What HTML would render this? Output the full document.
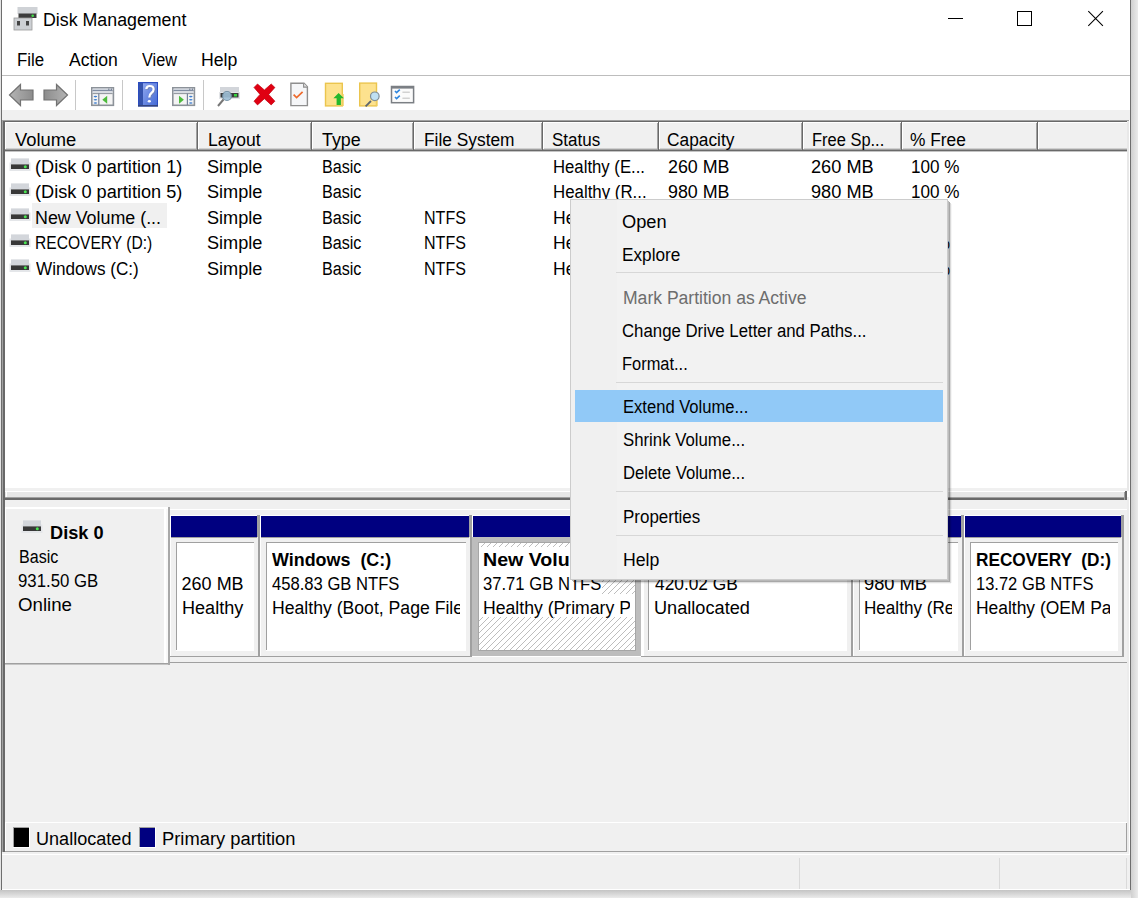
<!DOCTYPE html>
<html><head><meta charset="utf-8"><style>
html,body{margin:0;padding:0;width:1138px;height:898px;overflow:hidden;background:#fff;}
#w div{position:absolute;}
#w{position:absolute;left:0;top:0;width:1138px;height:898px;overflow:hidden;}
.t{font-family:"Liberation Sans",sans-serif;font-size:18px;line-height:22px;white-space:pre;transform-origin:0 0;}
svg{position:absolute;}
</style></head><body><div id="w">
<div style="left:0px;top:0px;width:1138px;height:898px;background:#e8e8e8;"></div>
<div style="left:1131px;top:0px;width:7px;height:898px;background:#d6d6d6;background:linear-gradient(90deg,#d0d0d0,#ebebeb)"></div>
<div style="left:0px;top:890px;width:1131px;height:8px;background:#d6d6d6;background:linear-gradient(180deg,#c4c4c4,#ebebeb)"></div>
<div style="left:0px;top:0px;width:1px;height:890px;background:#e4e4e4;"></div>
<div style="left:1px;top:0px;width:1130px;height:890px;background:#ffffff;"></div>
<div style="left:1px;top:0px;width:1px;height:890px;background:#6e6e6e;"></div>
<div style="left:1130px;top:0px;width:1px;height:890px;background:#6e6e6e;"></div>
<div style="left:2px;top:75px;width:1128px;height:1px;background:#bdbdbd;"></div>
<div style="left:2px;top:110px;width:1128px;height:10px;background:#f0f0f0;"></div>
<div style="left:2px;top:120px;width:1128px;height:372px;background:#ffffff;"></div>
<div style="left:2px;top:120px;width:1127px;height:1px;background:#a0a0a0;"></div>
<div style="left:2px;top:120px;width:1px;height:732px;background:#a0a0a0;"></div>
<div style="left:3px;top:121px;width:1125px;height:1px;background:#696969;"></div>
<div style="left:3px;top:121px;width:1px;height:731px;background:#696969;"></div>
<div style="left:4px;top:121px;width:1px;height:731px;background:#696969;"></div>
<div style="left:5px;top:488px;width:1122px;height:3px;background:#f0f0f0;"></div>
<div style="left:1127px;top:121px;width:2px;height:370px;background:#e8e8e8;"></div>
<div style="left:5px;top:122px;width:1122px;height:29px;background:#f0f0f0;"></div>
<div style="left:5px;top:122px;width:1122px;height:1px;background:#ffffff;"></div>
<div style="left:5px;top:148px;width:1122px;height:1px;background:#d0d0d0;"></div>
<div style="left:5px;top:149px;width:1122px;height:1px;background:#a0a0a0;"></div>
<div style="left:5px;top:150px;width:1122px;height:1px;background:#696969;"></div>
<div style="left:5px;top:151px;width:1122px;height:1px;background:#c4c4c4;"></div>
<div style="left:5px;top:122px;width:1px;height:27px;background:#ffffff;"></div>
<div style="left:196px;top:123px;width:1px;height:26px;background:#a0a0a0;"></div>
<div style="left:197px;top:122px;width:1px;height:29px;background:#696969;"></div>
<div style="left:198px;top:122px;width:1px;height:27px;background:#ffffff;"></div>
<div style="left:310px;top:123px;width:1px;height:26px;background:#a0a0a0;"></div>
<div style="left:311px;top:122px;width:1px;height:29px;background:#696969;"></div>
<div style="left:312px;top:122px;width:1px;height:27px;background:#ffffff;"></div>
<div style="left:412px;top:123px;width:1px;height:26px;background:#a0a0a0;"></div>
<div style="left:413px;top:122px;width:1px;height:29px;background:#696969;"></div>
<div style="left:414px;top:122px;width:1px;height:27px;background:#ffffff;"></div>
<div style="left:541px;top:123px;width:1px;height:26px;background:#a0a0a0;"></div>
<div style="left:542px;top:122px;width:1px;height:29px;background:#696969;"></div>
<div style="left:543px;top:122px;width:1px;height:27px;background:#ffffff;"></div>
<div style="left:657px;top:123px;width:1px;height:26px;background:#a0a0a0;"></div>
<div style="left:658px;top:122px;width:1px;height:29px;background:#696969;"></div>
<div style="left:659px;top:122px;width:1px;height:27px;background:#ffffff;"></div>
<div style="left:801px;top:123px;width:1px;height:26px;background:#a0a0a0;"></div>
<div style="left:802px;top:122px;width:1px;height:29px;background:#696969;"></div>
<div style="left:803px;top:122px;width:1px;height:27px;background:#ffffff;"></div>
<div style="left:900px;top:123px;width:1px;height:26px;background:#a0a0a0;"></div>
<div style="left:901px;top:122px;width:1px;height:29px;background:#696969;"></div>
<div style="left:902px;top:122px;width:1px;height:27px;background:#ffffff;"></div>
<div style="left:1036px;top:123px;width:1px;height:26px;background:#a0a0a0;"></div>
<div style="left:1037px;top:122px;width:1px;height:29px;background:#696969;"></div>
<div style="left:1038px;top:122px;width:1px;height:27px;background:#ffffff;"></div>
<div style="left:32px;top:203px;width:135px;height:25px;background:#f0f0f0;"></div>
<div style="left:5px;top:491px;width:1122px;height:6px;background:#e6e6e6;"></div>
<div style="left:5px;top:491px;width:1122px;height:1px;background:#ffffff;"></div>
<div style="left:6px;top:491px;width:1px;height:6px;background:#ffffff;"></div>
<div style="left:5px;top:497px;width:1122px;height:1px;background:#a0a0a0;"></div>
<div style="left:5px;top:498px;width:1122px;height:2px;background:#696969;"></div>
<div style="left:1124px;top:492px;width:1px;height:8px;background:#a0a0a0;"></div>
<div style="left:1125px;top:491px;width:2px;height:9px;background:#696969;"></div>
<div style="left:5px;top:500px;width:1122px;height:352px;background:#f0f0f0;"></div>
<div style="left:1127px;top:497px;width:2px;height:355px;background:#ececec;"></div>
<div style="left:1129px;top:120px;width:1px;height:735px;background:#ffffff;"></div>
<div style="left:5px;top:507px;width:163px;height:2px;background:#ffffff;"></div>
<div style="left:5px;top:507px;width:1px;height:156px;background:#ffffff;"></div>
<div style="left:5px;top:663px;width:165px;height:1px;background:#a0a0a0;"></div>
<div style="left:5px;top:664px;width:165px;height:1px;background:#c4c4c4;"></div>
<div style="left:164px;top:507px;width:2px;height:156px;background:#ffffff;"></div>
<div style="left:166px;top:509px;width:2px;height:154px;background:#f8f8f8;"></div>
<div style="left:168px;top:507px;width:2px;height:158px;background:#a8a8a8;"></div>
<div style="left:170px;top:509px;width:957px;height:1px;background:#ffffff;"></div>
<div style="left:170px;top:515px;width:1px;height:141px;background:#ffffff;"></div>
<div style="left:170px;top:515px;width:87px;height:1px;background:#ffffff;"></div>
<div style="left:171px;top:516px;width:86px;height:21px;background:#000080;"></div>
<div style="left:257px;top:515px;width:3px;height:22px;background:#a0a0a0;"></div>
<div style="left:258px;top:537px;width:2px;height:119px;background:#a0a0a0;"></div>
<div style="left:171px;top:537px;width:86px;height:1px;background:#a0a0a0;"></div>
<div style="left:176px;top:542px;width:78px;height:109px;background:#ffffff;"></div>
<div style="left:176px;top:542px;width:78px;height:1px;background:#a0a0a0;"></div>
<div style="left:176px;top:542px;width:1px;height:108px;background:#a0a0a0;"></div>
<div style="left:260px;top:515px;width:1px;height:141px;background:#ffffff;"></div>
<div style="left:260px;top:515px;width:209px;height:1px;background:#ffffff;"></div>
<div style="left:261px;top:516px;width:208px;height:21px;background:#000080;"></div>
<div style="left:469px;top:515px;width:3px;height:22px;background:#a0a0a0;"></div>
<div style="left:470px;top:537px;width:2px;height:119px;background:#a0a0a0;"></div>
<div style="left:261px;top:537px;width:208px;height:1px;background:#a0a0a0;"></div>
<div style="left:266px;top:542px;width:200px;height:109px;background:#ffffff;"></div>
<div style="left:266px;top:542px;width:200px;height:1px;background:#a0a0a0;"></div>
<div style="left:266px;top:542px;width:1px;height:108px;background:#a0a0a0;"></div>
<div style="left:472px;top:515px;width:1px;height:22px;background:#ffffff;"></div>
<div style="left:472px;top:515px;width:167px;height:1px;background:#ffffff;"></div>
<div style="left:473px;top:516px;width:166px;height:21px;background:#000080;"></div>
<div style="left:639px;top:515px;width:3px;height:22px;background:#a0a0a0;"></div>
<div style="left:640px;top:537px;width:2px;height:119px;background:#a0a0a0;"></div>
<div style="left:473px;top:537px;width:166px;height:1px;background:#a0a0a0;"></div>
<div style="left:472px;top:537px;width:169px;height:119px;background:#bdbdbd;"></div>
<div style="left:478px;top:542px;width:158px;height:109px;background:#a6a6a6;"></div>
<svg style="position:absolute;left:479px;top:543px" width="156" height="107" shape-rendering="crispEdges"><defs><pattern id="hp" x="0" y="0" width="6" height="6" patternUnits="userSpaceOnUse"><rect width="6" height="6" fill="#fff"/><path d="M5 0h1v1H5zM4 1h1v1H4zM3 2h1v1H3zM2 3h1v1H2zM1 4h1v1H1zM0 5h1v1H0z" fill="#bdbdbd"/></pattern></defs><rect width="156" height="107" fill="url(#hp)"/></svg>
<div style="left:479px;top:547px;width:121px;height:23px;background:#fff;"></div>
<div style="left:479px;top:570px;width:123px;height:24px;background:#fff;"></div>
<div style="left:479px;top:594px;width:156px;height:23px;background:#fff;"></div>
<div style="left:642px;top:515px;width:1px;height:141px;background:#ffffff;"></div>
<div style="left:642px;top:515px;width:208px;height:1px;background:#ffffff;"></div>
<div style="left:643px;top:516px;width:207px;height:21px;background:#000000;"></div>
<div style="left:850px;top:515px;width:3px;height:22px;background:#a0a0a0;"></div>
<div style="left:851px;top:537px;width:2px;height:119px;background:#a0a0a0;"></div>
<div style="left:643px;top:537px;width:207px;height:1px;background:#a0a0a0;"></div>
<div style="left:648px;top:542px;width:199px;height:109px;background:#ffffff;"></div>
<div style="left:648px;top:542px;width:199px;height:1px;background:#a0a0a0;"></div>
<div style="left:648px;top:542px;width:1px;height:108px;background:#a0a0a0;"></div>
<div style="left:853px;top:515px;width:1px;height:141px;background:#ffffff;"></div>
<div style="left:853px;top:515px;width:108px;height:1px;background:#ffffff;"></div>
<div style="left:854px;top:516px;width:107px;height:21px;background:#000080;"></div>
<div style="left:961px;top:515px;width:3px;height:22px;background:#a0a0a0;"></div>
<div style="left:962px;top:537px;width:2px;height:119px;background:#a0a0a0;"></div>
<div style="left:854px;top:537px;width:107px;height:1px;background:#a0a0a0;"></div>
<div style="left:859px;top:542px;width:99px;height:109px;background:#ffffff;"></div>
<div style="left:859px;top:542px;width:99px;height:1px;background:#a0a0a0;"></div>
<div style="left:859px;top:542px;width:1px;height:108px;background:#a0a0a0;"></div>
<div style="left:964px;top:515px;width:1px;height:141px;background:#ffffff;"></div>
<div style="left:964px;top:515px;width:157px;height:1px;background:#ffffff;"></div>
<div style="left:965px;top:516px;width:156px;height:21px;background:#000080;"></div>
<div style="left:1121px;top:515px;width:3px;height:22px;background:#a0a0a0;"></div>
<div style="left:1122px;top:537px;width:2px;height:119px;background:#a0a0a0;"></div>
<div style="left:965px;top:537px;width:156px;height:1px;background:#a0a0a0;"></div>
<div style="left:970px;top:542px;width:148px;height:109px;background:#ffffff;"></div>
<div style="left:970px;top:542px;width:148px;height:1px;background:#a0a0a0;"></div>
<div style="left:970px;top:542px;width:1px;height:108px;background:#a0a0a0;"></div>
<div style="left:641px;top:537px;width:3px;height:119px;background:#ffffff;"></div>
<div style="left:170px;top:656px;width:302px;height:1px;background:#a0a0a0;"></div>
<div style="left:472px;top:656px;width:169px;height:1px;background:#ffffff;"></div>
<div style="left:641px;top:656px;width:483px;height:1px;background:#a0a0a0;"></div>
<div style="left:170px;top:662px;width:957px;height:1px;background:#a0a0a0;"></div>
<div style="left:5px;top:822px;width:1122px;height:1px;background:#ffffff;"></div>
<div style="left:5px;top:822px;width:1px;height:30px;background:#ffffff;"></div>
<div style="left:5px;top:851px;width:1122px;height:1px;background:#a0a0a0;"></div>
<div style="left:1126px;top:823px;width:1px;height:29px;background:#a0a0a0;"></div>
<div style="left:13px;top:827px;width:17px;height:21px;background:#ffffff;"></div>
<div style="left:13px;top:827px;width:16px;height:20px;background:#a0a0a0;"></div>
<div style="left:14px;top:828px;width:15px;height:19px;background:#000;"></div>
<div style="left:139px;top:827px;width:17px;height:21px;background:#ffffff;"></div>
<div style="left:139px;top:827px;width:16px;height:20px;background:#a0a0a0;"></div>
<div style="left:140px;top:828px;width:15px;height:19px;background:#000080;"></div>
<div style="left:2px;top:852px;width:1128px;height:38px;background:#f0f0f0;"></div>
<div style="left:2px;top:854px;width:1128px;height:1px;background:#ffffff;"></div>
<div style="left:1129px;top:120px;width:1px;height:735px;background:#ffffff;"></div>
<div style="left:799px;top:858px;width:1px;height:31px;background:#dadada;"></div>
<div style="left:999px;top:858px;width:1px;height:31px;background:#dadada;"></div>
<div style="left:1126px;top:858px;width:1px;height:31px;background:#dadada;"></div>
<div style="left:2px;top:889px;width:1128px;height:1px;background:#ffffff;"></div>
<div style="left:1130px;top:0px;width:1px;height:890px;background:#6e6e6e;"></div>
<svg style="left:13px;top:6px" width="26" height="25" viewBox="0 0 26 25">
<rect x="4.5" y="1" width="20" height="7" fill="#cfd2d6"/>
<rect x="5.5" y="7.5" width="18" height="4.5" fill="#3c3c3c"/>
<circle cx="19.7" cy="9.7" r="1.3" fill="#45e04a"/>
<rect x="1" y="12" width="18" height="12" fill="#cdd0d4" stroke="#9a9a9a" stroke-width="0.8"/>
<rect x="4" y="15" width="3" height="4.5" fill="#444"/>
<rect x="13" y="15" width="3" height="4.5" fill="#444"/>
</svg>
<div style="left:948px;top:18px;width:15px;height:1px;background:#000"></div>
<div style="left:1017px;top:11px;width:13px;height:13px;border:1px solid #000"></div>
<svg style="left:1087px;top:10px" width="18" height="18" viewBox="0 0 18 18">
<path d="M1.3 1.2 L15.9 15.9 M15.9 1.2 L1.3 15.9" stroke="#000" stroke-width="1.05"/></svg>
<svg style="left:8px;top:83px" width="64" height="25" viewBox="0 0 64 25">
<defs><linearGradient id="ag" x1="0" y1="0" x2="1" y2="0"><stop offset="0" stop-color="#b4b4b4"/><stop offset="1" stop-color="#8c8c8c"/></linearGradient><linearGradient id="ag2" x1="1" y1="0" x2="0" y2="0"><stop offset="0" stop-color="#b4b4b4"/><stop offset="1" stop-color="#8c8c8c"/></linearGradient></defs>
<path d="M1.5 12 L12.5 1.5 L12.5 7 L25 7 L25 17 L12.5 17 L12.5 22.5 Z" fill="url(#ag)" stroke="#727272" stroke-width="1.2"/>
<path d="M59.5 12 L48.5 1.5 L48.5 7 L36 7 L36 17 L48.5 17 L48.5 22.5 Z" fill="url(#ag2)" stroke="#727272" stroke-width="1.2"/>
</svg>
<div style="left:75px;top:80px;width:1px;height:30px;background:#c8c8c8"></div>
<div style="left:122px;top:80px;width:1px;height:30px;background:#c8c8c8"></div>
<div style="left:203px;top:80px;width:1px;height:30px;background:#c8c8c8"></div>
<svg style="left:91px;top:87px" width="25" height="20" viewBox="0 0 25 20">
<rect x="0.8" y="0.8" width="21.599999999999998" height="17.5" fill="#f4f4f4" stroke="#8c9299" stroke-width="1.6"/>
<rect x="1.6" y="1.5" width="20.0" height="1.6" fill="#cdd3dc"/>
<rect x="17.2" y="1.5" width="1.2" height="1.6" fill="#7d889a"/><rect x="19.8" y="1.5" width="1.2" height="1.6" fill="#7d889a"/>
<rect x="1.6" y="3.1" width="20.0" height="1.1" fill="#75829a"/>
<rect x="1.6" y="4.6" width="20.0" height="1.3" fill="#d5dae2"/>
<rect x="1.6" y="6.1" width="20.0" height="1" fill="#8c9299"/>
<rect x="7.2" y="6.5" width="1.2" height="11.5" fill="#75829a"/>
<ellipse cx="4.4" cy="9.6" rx="1.8" ry="0.8" fill="#3f7fd0"/>
<ellipse cx="4.4" cy="12.8" rx="1.8" ry="0.8" fill="#3f7fd0"/>
<ellipse cx="4.4" cy="16" rx="1.8" ry="0.8" fill="#3f7fd0"/>
<path d="M16.2 8.7 L16.2 16.8 L11.3 12.8 Z" fill="#4dbb3c"/>
</svg>
<svg style="left:172px;top:87px" width="25" height="20" viewBox="0 0 25 20">
<rect x="0.8" y="0.8" width="21.599999999999998" height="17.5" fill="#f4f4f4" stroke="#8c9299" stroke-width="1.6"/>
<rect x="1.6" y="1.5" width="20.0" height="1.6" fill="#cdd3dc"/>
<rect x="17.2" y="1.5" width="1.2" height="1.6" fill="#7d889a"/><rect x="19.8" y="1.5" width="1.2" height="1.6" fill="#7d889a"/>
<rect x="1.6" y="3.1" width="20.0" height="1.1" fill="#75829a"/>
<rect x="1.6" y="4.6" width="20.0" height="1.3" fill="#d5dae2"/>
<rect x="1.6" y="6.1" width="20.0" height="1" fill="#8c9299"/>
<rect x="14.799999999999999" y="6.5" width="1.2" height="11.5" fill="#75829a"/>
<ellipse cx="18.799999999999997" cy="9.6" rx="1.8" ry="0.8" fill="#3f7fd0"/>
<ellipse cx="18.799999999999997" cy="12.8" rx="1.8" ry="0.8" fill="#3f7fd0"/>
<ellipse cx="18.799999999999997" cy="16" rx="1.8" ry="0.8" fill="#3f7fd0"/>
<path d="M7 8.7 L7 16.8 L11.9 12.8 Z" fill="#4dbb3c"/>
</svg>
<svg style="left:138px;top:82px" width="21" height="25" viewBox="0 0 21 25">
<defs><linearGradient id="hg" x1="0" y1="0" x2="1" y2="1"><stop offset="0" stop-color="#8ea6ee"/><stop offset="1" stop-color="#456bd6"/></linearGradient></defs>
<rect x="0" y="0" width="20" height="24.5" fill="#2b4cc0"/>
<rect x="1" y="1.2" width="4" height="22" fill="#3553ad"/>
<rect x="5" y="1.2" width="14" height="22" fill="url(#hg)"/>
<rect x="0" y="23" width="20" height="1.5" fill="#34457e"/>
<path d="M8.3 7.2 Q8.6 4 11.8 4 Q15.6 4 15.6 7.3 Q15.6 9.6 13.4 11 Q11.3 12.5 11.3 15.6" fill="none" stroke="#6d7fb8" stroke-width="2.4" transform="translate(0.8,0.8)"/>
<path d="M8.3 7.2 Q8.6 4 11.8 4 Q15.6 4 15.6 7.3 Q15.6 9.6 13.4 11 Q11.3 12.5 11.3 15.6" fill="none" stroke="#ffffff" stroke-width="2.2"/>
<ellipse cx="11.3" cy="19.3" rx="1.6" ry="1.3" fill="#ffffff"/>
</svg>
<svg style="left:217px;top:86px" width="25" height="21" viewBox="0 0 25 21">
<rect x="3" y="1" width="19" height="5" fill="#d2d5da"/>
<rect x="2" y="6" width="21" height="7" fill="#e3e5e8"/>
<rect x="3.5" y="7" width="18" height="4.5" fill="#3c3c3c"/>
<rect x="17" y="8" width="3" height="2.5" fill="#37d43f"/>
<circle cx="10" cy="10" r="4.5" fill="#9fc0d8" stroke="#6d8ba0" stroke-width="1.2" opacity="0.9"/>
<line x1="6.5" y1="13.5" x2="1" y2="20" stroke="#777" stroke-width="2"/>
</svg>
<svg style="left:250px;top:80px" width="30" height="30" viewBox="0 0 30 30">
<path d="M4 7.5 L7.5 4 L14.4 10 L21.2 4 L24.9 7.5 L18.7 14.4 L24.9 21.2 L21.2 24.9 L14.4 18.7 L7.5 24.9 L4 21.2 L10 14.4 Z" fill="#e00012" stroke="#c0000e" stroke-width="0.7"/>
</svg>
<svg style="left:289px;top:82px" width="21" height="26" viewBox="0 0 21 26">
<path d="M1.9 1.3 L15 1.3 L18.4 4.7 L18.4 23.6 L1.9 23.6 Z" fill="#f5f6f8" stroke="#8e8e8e" stroke-width="1.4"/>
<path d="M14.6 1.3 L14.6 5.1 L18.4 5.1" fill="#e6e6e6" stroke="#8e8e8e" stroke-width="1.1"/>
<path d="M4.6 12.6 L7.6 15.6 L13.6 9.8" fill="none" stroke="#ee6a2c" stroke-width="1.7"/>
</svg>
<svg style="left:324px;top:82px" width="22" height="26" viewBox="0 0 22 26">
<rect x="1.5" y="1.3" width="16.8" height="22.6" fill="#fde28e" stroke="#ebc54e" stroke-width="1.4"/>
<rect x="18" y="12" width="1.7" height="12" fill="#f0cd5e"/>
<path d="M14.6 10.9 L19.9 16.3 L16.9 16.3 L16.9 22.9 L12.6 22.9 L12.6 16.3 L9.4 16.3 Z" fill="#24b82c"/>
</svg>
<svg style="left:358px;top:82px" width="23" height="26" viewBox="0 0 23 26">
<rect x="1.7" y="1.1" width="16.8" height="22.8" fill="#fde28e" stroke="#ebc54e" stroke-width="1.4"/>
<rect x="18" y="18" width="1.6" height="6" fill="#f0cd5e"/>
<line x1="13" y1="19" x2="7.6" y2="24.3" stroke="#5d6670" stroke-width="1.8"/>
<circle cx="16.8" cy="14.3" r="4.3" fill="#bfe0f3" stroke="#7f8d96" stroke-width="1.2"/>
</svg>
<svg style="left:390px;top:85px" width="25" height="19" viewBox="0 0 25 19">
<rect x="1.5" y="1.5" width="22.1" height="16.2" fill="#fbfbfb" stroke="#7b7f84" stroke-width="1.5"/>
<rect x="1.5" y="1" width="22.1" height="2.6" fill="#7b7f84"/>
<path d="M5 6 L6.6 7.6 L9.8 4.6" fill="none" stroke="#2e86de" stroke-width="1.6"/>
<path d="M5 12 L6.6 13.6 L9.8 10.6" fill="none" stroke="#2e86de" stroke-width="1.6"/>
<line x1="12.4" y1="7.2" x2="19.8" y2="7.2" stroke="#c4c4c4" stroke-width="1.1"/>
<line x1="12.4" y1="13.2" x2="19.8" y2="13.2" stroke="#c4c4c4" stroke-width="1.1"/>
</svg>
<svg style="left:9px;top:158px" width="22" height="14" viewBox="0 0 22 14">
<rect x="0.5" y="4.5" width="21" height="8.5" fill="#e4e6e9"/>
<rect x="2" y="0.4" width="18" height="6" fill="#d3d6db"/>
<rect x="2" y="6.4" width="18" height="4.6" fill="#383838"/>
<circle cx="16.3" cy="8.7" r="1.5" fill="#49e552"/>
</svg>
<svg style="left:9px;top:183px" width="22" height="14" viewBox="0 0 22 14">
<rect x="0.5" y="4.5" width="21" height="8.5" fill="#e4e6e9"/>
<rect x="2" y="0.4" width="18" height="6" fill="#d3d6db"/>
<rect x="2" y="6.4" width="18" height="4.6" fill="#383838"/>
<circle cx="16.3" cy="8.7" r="1.5" fill="#49e552"/>
</svg>
<svg style="left:9px;top:208px" width="22" height="14" viewBox="0 0 22 14">
<rect x="0.5" y="4.5" width="21" height="8.5" fill="#e4e6e9"/>
<rect x="2" y="0.4" width="18" height="6" fill="#d3d6db"/>
<rect x="2" y="6.4" width="18" height="4.6" fill="#383838"/>
<circle cx="16.3" cy="8.7" r="1.5" fill="#49e552"/>
</svg>
<svg style="left:9px;top:234px" width="22" height="14" viewBox="0 0 22 14">
<rect x="0.5" y="4.5" width="21" height="8.5" fill="#e4e6e9"/>
<rect x="2" y="0.4" width="18" height="6" fill="#d3d6db"/>
<rect x="2" y="6.4" width="18" height="4.6" fill="#383838"/>
<circle cx="16.3" cy="8.7" r="1.5" fill="#49e552"/>
</svg>
<svg style="left:9px;top:259px" width="22" height="14" viewBox="0 0 22 14">
<rect x="0.5" y="4.5" width="21" height="8.5" fill="#e4e6e9"/>
<rect x="2" y="0.4" width="18" height="6" fill="#d3d6db"/>
<rect x="2" y="6.4" width="18" height="4.6" fill="#383838"/>
<circle cx="16.3" cy="8.7" r="1.5" fill="#49e552"/>
</svg>
<svg style="left:20.5px;top:520px" width="22" height="14" viewBox="0 0 22 14">
<rect x="0.5" y="4.5" width="21" height="8.5" fill="#e4e6e9"/>
<rect x="2" y="0.4" width="18" height="6" fill="#d3d6db"/>
<rect x="2" y="6.4" width="18" height="4.6" fill="#383838"/>
<circle cx="16.3" cy="8.7" r="1.5" fill="#49e552"/>
</svg>
<div class="t" style="left:43.41px;top:9.00px;color:#000;transform:scaleX(0.9882);">Disk Management</div><div class="t" style="left:17.46px;top:49.00px;color:#000;transform:scaleX(0.9370);">File</div><div class="t" style="left:68.60px;top:49.00px;color:#000;transform:scaleX(0.9776);">Action</div><div class="t" style="left:142.40px;top:49.00px;color:#000;transform:scaleX(0.9026);">View</div><div class="t" style="left:201.32px;top:49.00px;color:#000;transform:scaleX(0.9829);">Help</div><div class="t" style="left:14.80px;top:128.50px;color:#000;transform:scaleX(1.0203);">Volume</div><div class="t" style="left:207.73px;top:128.50px;color:#000;transform:scaleX(0.9736);">Layout</div><div class="t" style="left:322.30px;top:128.50px;color:#000;transform:scaleX(0.9921);">Type</div><div class="t" style="left:423.74px;top:128.50px;color:#000;transform:scaleX(0.9630);">File System</div><div class="t" style="left:552.46px;top:128.50px;color:#000;transform:scaleX(0.9440);">Status</div><div class="t" style="left:667.34px;top:128.50px;color:#000;transform:scaleX(0.9623);">Capacity</div><div class="t" style="left:811.69px;top:128.50px;color:#000;transform:scaleX(0.9143);">Free Sp...</div><div class="t" style="left:910.34px;top:128.50px;color:#000;transform:scaleX(0.9625);">% Free</div><div class="t" style="left:34.79px;top:156.00px;color:#000;transform:scaleX(1.0090);">(Disk 0 partition 1)</div><div class="t" style="left:207.39px;top:156.00px;color:#000;transform:scaleX(1.0075);">Simple</div><div class="t" style="left:321.60px;top:156.00px;color:#000;transform:scaleX(0.8953);">Basic</div><div class="t" style="left:34.79px;top:181.30px;color:#000;transform:scaleX(1.0090);">(Disk 0 partition 5)</div><div class="t" style="left:207.39px;top:181.30px;color:#000;transform:scaleX(1.0075);">Simple</div><div class="t" style="left:321.60px;top:181.30px;color:#000;transform:scaleX(0.8953);">Basic</div><div class="t" style="left:34.81px;top:206.80px;color:#000;transform:scaleX(0.9920);">New Volume (...</div><div class="t" style="left:207.39px;top:206.80px;color:#000;transform:scaleX(1.0075);">Simple</div><div class="t" style="left:321.60px;top:206.80px;color:#000;transform:scaleX(0.8953);">Basic</div><div class="t" style="left:34.93px;top:232.20px;color:#000;transform:scaleX(0.8662);">RECOVERY (D:)</div><div class="t" style="left:207.39px;top:232.20px;color:#000;transform:scaleX(1.0075);">Simple</div><div class="t" style="left:321.60px;top:232.20px;color:#000;transform:scaleX(0.8953);">Basic</div><div class="t" style="left:35.80px;top:257.70px;color:#000;transform:scaleX(0.9514);">Windows (C:)</div><div class="t" style="left:207.39px;top:257.70px;color:#000;transform:scaleX(1.0075);">Simple</div><div class="t" style="left:321.60px;top:257.70px;color:#000;transform:scaleX(0.8953);">Basic</div><div class="t" style="left:423.81px;top:206.80px;color:#000;transform:scaleX(0.8911);">NTFS</div><div class="t" style="left:423.81px;top:232.20px;color:#000;transform:scaleX(0.8911);">NTFS</div><div class="t" style="left:423.81px;top:257.70px;color:#000;transform:scaleX(0.8911);">NTFS</div><div class="t" style="left:552.77px;top:156.00px;color:#000;transform:scaleX(0.9289);">Healthy (E...</div><div class="t" style="left:552.76px;top:181.30px;color:#000;transform:scaleX(0.9357);">Healthy (R...</div><div class="t" style="left:552.72px;top:206.80px;color:#000;transform:scaleX(0.9755);">Healthy (P...</div><div class="t" style="left:552.72px;top:232.20px;color:#000;transform:scaleX(0.9755);">Healthy (P...</div><div class="t" style="left:552.72px;top:257.70px;color:#000;transform:scaleX(0.9755);">Healthy (P...</div><div class="t" style="left:667.61px;top:156.00px;color:#000;transform:scaleX(0.9917);">260 MB</div><div class="t" style="left:667.61px;top:181.30px;color:#000;transform:scaleX(0.9917);">980 MB</div><div class="t" style="left:811.09px;top:156.00px;color:#000;transform:scaleX(1.0100);">260 MB</div><div class="t" style="left:811.09px;top:181.30px;color:#000;transform:scaleX(1.0100);">980 MB</div><div class="t" style="left:911.35px;top:156.00px;color:#000;transform:scaleX(0.9500);">100 %</div><div class="t" style="left:911.35px;top:181.30px;color:#000;transform:scaleX(0.9500);">100 %</div><div class="t" style="left:911.34px;top:206.80px;color:#000;transform:scaleX(0.9567);">9 %</div><div class="t" style="left:911.35px;top:232.20px;color:#000;transform:scaleX(0.9500);">93 %</div><div class="t" style="left:912.30px;top:257.70px;color:#000;transform:scaleX(0.9268);">45 %</div><div class="t" style="left:49.89px;top:522.00px;color:#000;transform:scaleX(1.0098);font-weight:bold;">Disk 0</div><div class="t" style="left:18.71px;top:546.00px;color:#000;transform:scaleX(0.8930);">Basic</div><div class="t" style="left:18.47px;top:570.00px;color:#000;transform:scaleX(0.9321);">931.50 GB</div><div class="t" style="left:18.06px;top:593.70px;color:#000;transform:scaleX(1.0380);">Online</div><div class="t" style="left:181.60px;top:573.00px;color:#000;">260 MB</div><div class="t" style="left:182.00px;top:597.00px;color:#000;transform:scaleX(1.0033);">Healthy</div><div class="t" style="left:272.30px;top:549.00px;color:#000;transform:scaleX(0.9950);font-weight:bold;">Windows  (C:)</div><div class="t" style="left:272.30px;top:573.00px;color:#000;transform:scaleX(0.9226);">458.83 GB NTFS</div><div style="left:0;top:0;width:460px;height:898px;overflow:hidden"><div class="t" style="left:271.52px;top:597.00px;color:#000;transform:scaleX(0.9793);">Healthy (Boot, Page File Crash Dump, Primary Partition)</div></div><div style="left:0;top:0;width:630px;height:898px;overflow:hidden"><div class="t" style="left:483.01px;top:549.00px;color:#000;transform:scaleX(1.0885);font-weight:bold;">New Volume  (E:)</div></div><div style="left:0;top:0;width:630px;height:898px;overflow:hidden"><div class="t" style="left:483.18px;top:573.00px;color:#000;transform:scaleX(0.9238);">37.71 GB NTFS</div></div><div style="left:0;top:0;width:630px;height:898px;overflow:hidden"><div class="t" style="left:483.12px;top:597.00px;color:#000;transform:scaleX(0.9792);">Healthy (Primary Partition)</div></div><div class="t" style="left:654.80px;top:573.00px;color:#000;transform:scaleX(0.9625);">420.02 GB</div><div class="t" style="left:653.79px;top:597.00px;color:#000;transform:scaleX(1.0086);">Unallocated</div><div class="t" style="left:863.68px;top:573.00px;color:#000;transform:scaleX(1.0167);">980 MB</div><div style="left:0;top:0;width:952px;height:898px;overflow:hidden"><div class="t" style="left:863.75px;top:597.00px;color:#000;transform:scaleX(0.9495);">Healthy (Recovery Partition)</div></div><div class="t" style="left:975.54px;top:549.00px;color:#000;transform:scaleX(0.9568);font-weight:bold;">RECOVERY  (D:)</div><div class="t" style="left:975.58px;top:573.00px;color:#000;transform:scaleX(0.9167);">13.72 GB NTFS</div><div style="left:0;top:0;width:1110px;height:898px;overflow:hidden"><div class="t" style="left:975.53px;top:597.00px;color:#000;transform:scaleX(0.9676);">Healthy (OEM Partition)</div></div><div class="t" style="left:35.60px;top:828.00px;color:#000;transform:scaleX(1.0043);">Unallocated</div><div class="t" style="left:161.98px;top:828.00px;color:#000;transform:scaleX(1.0186);">Primary partition</div>
<div style="left:948px;top:201px;width:1px;height:380px;background:rgba(0,0,0,0.26)"></div>
<div style="left:949px;top:202px;width:1px;height:380px;background:rgba(0,0,0,0.35)"></div>
<div style="left:950px;top:203px;width:1px;height:380px;background:rgba(0,0,0,0.15)"></div>
<div style="left:951px;top:204px;width:1px;height:379px;background:rgba(0,0,0,0.04)"></div>
<div style="left:572px;top:580px;width:376px;height:1px;background:rgba(0,0,0,0.28)"></div>
<div style="left:573px;top:581px;width:376px;height:1px;background:rgba(0,0,0,0.34)"></div>
<div style="left:574px;top:582px;width:376px;height:1px;background:rgba(0,0,0,0.12)"></div>
<div style="left:575px;top:583px;width:376px;height:1px;background:rgba(0,0,0,0.035)"></div>
<div style="left:570px;top:199px;width:378px;height:381px;background:#cccccc"></div>
<div style="left:571px;top:200px;width:376px;height:379px;background:#f2f2f2"></div>
<div style="left:571px;top:200px;width:46px;height:379px;background:#f0f0f0"></div>
<div style="left:616px;top:272px;width:327px;height:1px;background:#d7d7d7"></div>
<div style="left:616px;top:382px;width:327px;height:1px;background:#d7d7d7"></div>
<div style="left:616px;top:491px;width:327px;height:1px;background:#d7d7d7"></div>
<div style="left:616px;top:535px;width:327px;height:1px;background:#d7d7d7"></div>
<div style="left:575px;top:390px;width:368px;height:32px;background:#91c9f7"></div>
<div class="t" style="left:621.79px;top:211.00px;color:#000;transform:scaleX(1.0143);">Open</div><div class="t" style="left:622.24px;top:244.00px;color:#000;transform:scaleX(0.9559);">Explore</div><div class="t" style="left:622.62px;top:287.00px;color:#6d6d6d;transform:scaleX(0.9753);">Mark Partition as Active</div><div class="t" style="left:622.27px;top:320.00px;color:#000;transform:scaleX(0.9327);">Change Drive Letter and Paths...</div><div class="t" style="left:622.29px;top:353.00px;color:#000;transform:scaleX(0.9129);">Format...</div><div class="t" style="left:622.68px;top:396.00px;color:#000;transform:scaleX(0.9209);">Extend Volume...</div><div class="t" style="left:622.67px;top:429.00px;color:#000;transform:scaleX(0.9318);">Shrink Volume...</div><div class="t" style="left:622.68px;top:462.00px;color:#000;transform:scaleX(0.9246);">Delete Volume...</div><div class="t" style="left:622.66px;top:505.50px;color:#000;transform:scaleX(0.9420);">Properties</div><div class="t" style="left:622.62px;top:549.00px;color:#000;transform:scaleX(0.9829);">Help</div>
</div></body></html>
